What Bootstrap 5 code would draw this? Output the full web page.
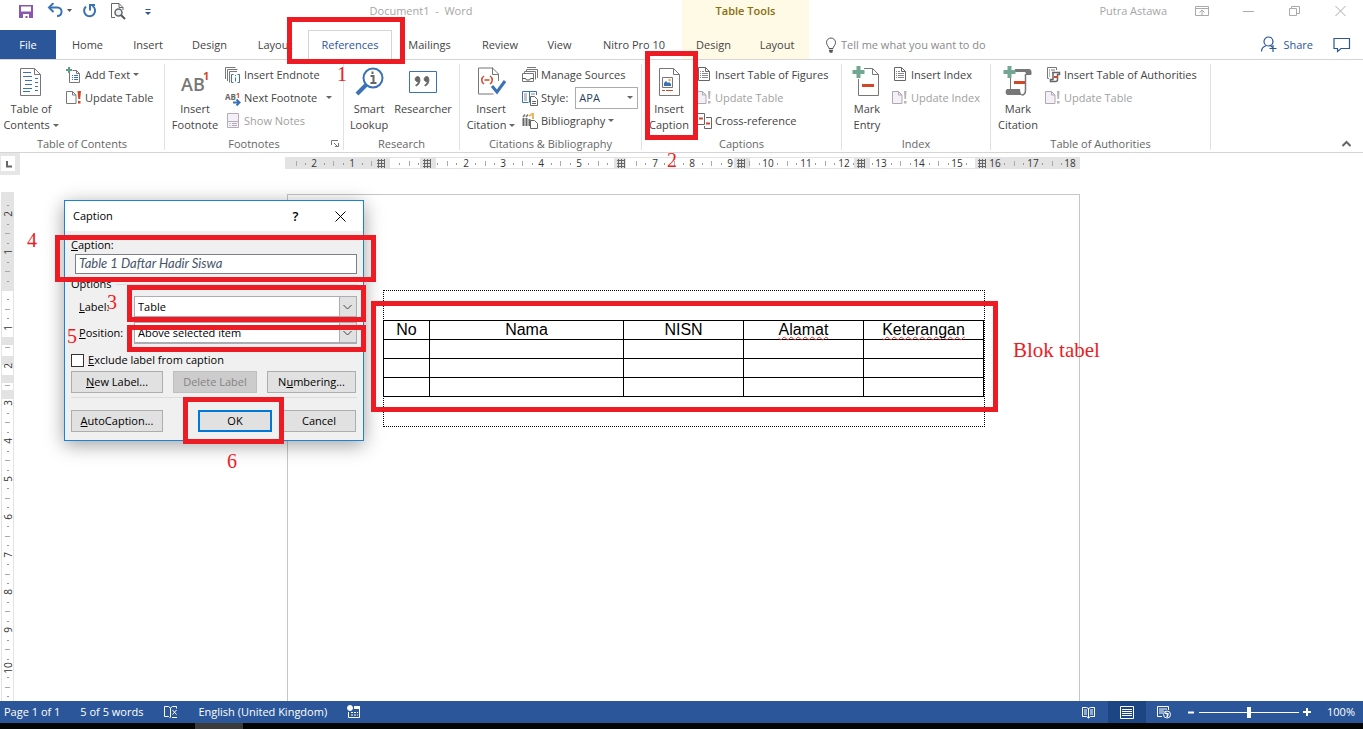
<!DOCTYPE html>
<html lang="en">
<head>
<meta charset="utf-8">
<meta name="viewport" content="width=device-width, initial-scale=1">
<title>Document1 - Word</title>
<link href="https://cdn.jsdelivr.net/npm/bootstrap@5.3.0/dist/css/bootstrap.min.css" rel="stylesheet">
<style>
:root { --ui: "Open Sans", "Noto Sans", sans-serif; --blue: #2b579a; --line: #d5d5d5; --mark: #ed1c24; }
body { font-family: var(--ui); font-size: 11px; line-height: 16px; color: #444; background: #fff; height: 100vh; overflow: hidden; }
button, input, select { font: inherit; color: inherit; }
svg { display: block; flex: none; fill: none; }
.plain { border: 0; background: none; padding: 0; color: inherit; text-align: center; }
a { color: inherit; text-decoration: none; }

/* title bar and tabs */
.titlebar { display: grid; grid-template-columns: 160px 522px 127px 1fr; height: 30px; color: #a6a6a6; }
.titlebar > * { padding-bottom: 8px; }
.doc-name { white-space: pre; }
.tooltab { background: #fffae6; color: #8a6d0f; }
.winbtn { width: 46px; height: 22px; display: flex; align-items: center; justify-content: center; }
.tabs { display: grid; grid-template-columns: 56px 63px 58px 65px 66px 84px 75px 66px 53px 96px 63px 64px 1fr; height: 29px; }
.tab { display: flex; align-items: center; justify-content: center; position: relative; white-space: nowrap; }
.tab-file { background: var(--blue); color: #fff; }
.tab-active { border: 1px solid var(--line); border-bottom: 0; color: var(--blue); }
.mk { position: absolute; border: 5px solid var(--mark); pointer-events: none; z-index: 5; }
.num { position: absolute; font-family: "Liberation Serif", serif; font-size: 20px; line-height: 20px; color: var(--mark); z-index: 6; white-space: nowrap; }
.mk-tab { inset: -14px -14px -5px -22px; }
.ask { width: 170px; border: 0; padding: 0; background: none; outline: 0; }
.ask::placeholder { color: #8a8a8a; opacity: 1; }
.share { color: var(--blue); }

/* ribbon */
.ribbon { display: grid; grid-template-columns: 165px 179px 116px 182px 200px 149px 220px 1fr; border-top: 1px solid var(--line); border-bottom: 1px solid var(--line); padding: 4px 0 2px; }
.group { border-right: 1px solid #e1e1e1; position: relative; }
.group-body { height: 74px; display: flex; }
.group-name { line-height: 12px; text-align: center; color: #666; }
.big { padding-top: 2px; display: flex; flex-direction: column; align-items: center; white-space: nowrap; width: 62px; flex: none; position: relative; }
.big svg.pic { margin-bottom: 3px; }
.smalls { display: flex; flex-direction: column; align-items: flex-start; }
.item { height: 23px; padding: 0 0 2px; display: flex; align-items: center; gap: 3px; white-space: nowrap; }
.item:disabled { color: #a0a0a0; }
.w60 { width: 60px; } .w58 { width: 58px; } .w54 { width: 54px; } .w50 { width: 50px; }
.caret { display: inline-block; border: 3px solid transparent; border-top-color: #666; border-bottom: 0; vertical-align: 2px; }
.style-pick { width: 63px; height: 22px; border: 1px solid #ababab; border-radius: 0; padding: 0 3px; color: #2b3f5c; appearance: none;
  background: #fff url("data:image/svg+xml,%3Csvg xmlns='http://www.w3.org/2000/svg' width='6' height='3'%3E%3Cpath d='M0 0h6L3 3z' fill='%23666'/%3E%3C/svg%3E") no-repeat right 4px center; }
.mk-cap { inset: -13px -2px -2px 3px; }

/* document */
.workspace { position: relative; overflow: hidden; min-height: 0; }
.rule-row { margin-bottom: 17px; }
.corner { width: 20px; height: 22px; background: #e6e6e6; padding: 3px 5px 4px 1px; }
.corner div { background: #fff; height: 15px; }
.hruler { padding-right: 18px; }
.vruler { width: 20px; padding-left: 1px; }
.ruler text { font-size: 10px; fill: #333; text-anchor: middle; }
.page-col { padding: 2px 16px 0 0; }
.sheet { width: 793px; border: 1px solid #c6c6c6; border-bottom: 0; padding: 95px; }
.frame { width: 602px; border: 1px dotted #000; padding: 29px 0; position: relative; }
.grid { font-family: "Liberation Sans", sans-serif; font-size: 16px; line-height: 18px; color: #000; border: 1px dotted #000; border-collapse: collapse; table-layout: fixed; width: 601px; margin-left: -1px; }
.grid th, .grid td { border: 1px solid #000; height: 19px; padding: 0; text-align: center; font-weight: 400; }
.c-no { width: 46px; } .c-nama { width: 194px; } .c-std { width: 120px; }
.typo { text-decoration: underline wavy #e03030 1px; text-underline-offset: 1px; text-decoration-skip-ink: none; }
.mk-table { inset: 10px -14px 14px -13px; }
.blok { left: 629px; top: 49px; font-size: 21px; }

/* dialog */
.dlg { position: absolute; left: 64px; top: 47px; width: 300px; border: 1px solid #1883d7; background: #f0f0f0; color: #000; box-shadow: 0 4px 18px rgba(0,0,0,.38); }
.dlg-head { background: #fff; height: 30px; padding-left: 8px; }
.dlg-head button { width: 45px; height: 30px; }
.help { font-size: 13px; }
.dlg-body { padding: 6px 6px 8px; }
.boxed { display: block; width: 282px; height: 20px; margin: 1px 0 2px 4px; border: 1px solid #7a7f88; background: #fff; padding: 0 3px 2px; font: italic 13px/16px Lato, sans-serif; color: #44546a; }
.optline { flex: 1; height: 1px; background: #dcdcdc; }
.drop { width: 223px; height: 22px; border: 1px solid #abadb3; border-width: 1px 1px 2px; border-radius: 0; padding: 0 3px; appearance: none; color: #000;
  background: #fff url("data:image/svg+xml,%3Csvg xmlns='http://www.w3.org/2000/svg' width='17' height='20'%3E%3Cpath d='M0 0h17v20H0z' fill='%23e1e1e1'/%3E%3Cpath d='M.5 0v20' stroke='%23abadb3'/%3E%3Cpath d='M4.500 8l4 4 4-4' fill='none' stroke='%23444'/%3E%3C/svg%3E") no-repeat right top; }
.tick { appearance: none; width: 13px; height: 13px; border: 1px solid #333; background: #fff; margin: 0 4px 0 0; }
.tick-row { margin: 8px 0 3px; }
.push { height: 22px; border: 1px solid #adadad; background: #e1e1e1; padding: 0; line-height: 18px; }
.push:disabled { background: #ccc; border-color: #bfbfbf; color: #838383; }
.push.main { border: 2px solid #0078d7; width: 74px; margin-right: 10px; }
.push-row { padding-right: 1px; }
.w92 { width: 92px; } .w84 { width: 84px; } .w89 { width: 89px; } .w74 { width: 74px; }
.mk-cp { left: -10px; top: 34px; width: 321px; height: 47px; }
.mk-lb { left: 62px; top: 84px; width: 239px; height: 37px; }
.mk-ps { left: 62px; top: 124px; width: 239px; height: 27px; }
.mk-ok { left: 118px; top: 196px; width: 101px; height: 47px; }
.n1 { left: 337px; top: 64px; } .n2 { left: 667px; top: 150px; }
.n3 { left: 42px; top: 91px; } .n4 { left: -38px; top: 29px; } .n5 { left: 2px; top: 125px; } .n6 { left: 162px; top: 250px; }

/* status bar */
.status { background: var(--blue); color: #fff; height: 22px; }
.status svg { stroke: #fff; }
.status-left { gap: 20px; padding-left: 4px; }
.view-on { background: #1c4583; width: 38px; height: 22px; display: flex; align-items: center; justify-content: center; }
.zoomer { appearance: none; width: 100px; height: 12px; margin: 0; background: linear-gradient(#fff, #fff) center / 100% 1px no-repeat; }
.zoomer::-webkit-slider-thumb { appearance: none; width: 4px; height: 11px; background: #fff; }
.taskbar { background: #050505; height: 6px; padding-left: 195px; }
.taskbar div { background: #3b3b3b; width: 48px; height: 6px; }
</style>
</head>
<body class="d-flex flex-column position-relative">

<svg width="0" height="0" class="position-absolute">
  <defs>
    <symbol id="upd" viewBox="0 0 16 16"><path d="M.5 1.500h6l3.500 3.500v8.500H.5z" fill="#fff" stroke="#777"/><path d="M6.500 1.500V5H10" stroke="#777"/><path d="M11.500 1H15l-.8 8h-1.900zM12 11h2.500v2.500H12z" fill="#d24726"/></symbol>
    <symbol id="upd-off" viewBox="0 0 16 16"><path d="M.5 1.500h6l3.500 3.500v8.500H.5z" fill="#f5eff7" stroke="#b0a8b0"/><path d="M6.500 1.500V5H10" stroke="#b0a8b0"/><path d="M12 1h2.500l-.5 8h-1.500zM12 11h2.500v2.500H12z" fill="#b5b5b5"/></symbol>
    <symbol id="list" viewBox="0 0 16 16"><path d="M2.500.500h7l4 4v9h-11z" fill="#fff" stroke="#666"/><path d="M9.500.500v4h4" stroke="#666"/><path d="M4 4.500h1M6 4.500h2M4 6.500h1M6 6.500h6M4 8.500h1M6 8.500h6M4 10.500h1M6 10.500h6" stroke="#888"/></symbol>
  </defs>
</svg>

<header>
  <div class="titlebar">
    <div class="d-flex align-items-center">
      <button class="plain ms-3" aria-label="Save"><svg width="20" height="16"><path d="M3 2h14v13H3z" fill="#8a56b0"/><path d="M5 3.500h10v5H5zM7 11h6v4h-1.500v-2H9.500v2H7z" fill="#fff"/></svg></button>
      <button class="plain ms-2" aria-label="Undo"><svg width="28" height="16"><path d="M5 4.500h8.500c5.500 0 5.500 8.500-.5 8.500" stroke="#3a72b4" stroke-width="2"/><path d="M9.500 0L5 4.500 9.500 9" stroke="#3a72b4" stroke-width="2"/><path d="M23 6h5l-2.500 3z" fill="#555"/></svg></button>
      <button class="plain ms-2" aria-label="Redo"><svg width="20" height="16"><path d="M6 3.500a5.500 5.500 0 1 0 6.500-.5" stroke="#3a72b4" stroke-width="2"/><path d="M10 7.500V2h5" stroke="#3a72b4" stroke-width="2"/></svg></button>
      <button class="plain ms-2" aria-label="Print Preview"><svg width="20" height="18"><path d="M7 15.500H3.500v-14H11l4 4V8M11 1.500v4h4" stroke="#666"/><circle cx="10.500" cy="10.500" r="3.500" stroke="#666" stroke-width="1.500" fill="#e8f0f8"/><path d="M13 13l4 4" stroke="#555" stroke-width="2"/></svg></button>
      <button class="plain ms-3" aria-label="Customize Quick Access Toolbar"><svg width="8" height="10"><path d="M1.500 3.500h5" stroke="#2b579a"/><path d="M1 6h6L4 9z" fill="#2b579a"/></svg></button>
    </div>
    <div class="doc-name d-flex align-items-center justify-content-center">Document1  -  Word</div>
    <div class="tooltab d-flex align-items-center justify-content-center fw-semibold">Table Tools</div>
    <div class="d-flex align-items-center justify-content-end">
      <span class="me-2 pe-1">Putra Astawa</span>
      <button class="plain winbtn" aria-label="Ribbon Display Options"><svg width="14" height="10" stroke="#aaa"><path d="M.5.5h13v9H.5zM.5 2.500h13M7 9V4M4.500 6.500L7 4l2.500 2.500"/></svg></button>
      <button class="plain winbtn" aria-label="Minimize"><svg width="11" height="10" stroke="#aaa"><path d="M0 5.500h11"/></svg></button>
      <button class="plain winbtn" aria-label="Restore"><svg width="11" height="10" stroke="#aaa"><path d="M.5 2.500h7v7h-7zM2.500 2.500v-2h8v7h-3"/></svg></button>
      <button class="plain winbtn" aria-label="Close"><svg width="11" height="10" stroke="#aaa"><path d="M.5 0l10 10M10.500 0l-10 10"/></svg></button>
    </div>
  </div>
  <nav class="tabs">
    <a href="#" class="tab tab-file">File</a>
    <a href="#" class="tab">Home</a>
    <a href="#" class="tab">Insert</a>
    <a href="#" class="tab">Design</a>
    <a href="#" class="tab">Layout</a>
    <a href="#" class="tab tab-active">References<span class="mk mk-tab"></span></a>
    <a href="#" class="tab">Mailings</a>
    <a href="#" class="tab">Review</a>
    <a href="#" class="tab">View</a>
    <a href="#" class="tab">Nitro Pro 10</a>
    <a href="#" class="tab tooltab text-reset">Design</a>
    <a href="#" class="tab tooltab text-reset">Layout</a>
    <div class="d-flex align-items-center ps-3">
      <svg width="12" height="16" stroke="#555"><path d="M4 11.500c0-2-2.500-3-2.500-6a4.500 4.500 0 0 1 9 0c0 3-2.500 4-2.500 6z"/><path d="M4 13.500h4M4.500 15h3" stroke-width="1.500"/></svg>
      <input class="ask ms-1" type="text" aria-label="Tell me what you want to do" placeholder="Tell me what you want to do">
      <button class="plain share ms-auto d-flex align-items-center gap-1"><svg width="18" height="17" stroke="#2b579a" stroke-width="1.200"><circle cx="7.500" cy="5.500" r="4.500"/><path d="M.5 15.500c0-3 2-5 5-6M9.500 10c1 .4 1.500.8 2 1.300M12 9v7M8.500 12.500h7"/></svg>Share</button>
      <button class="plain ms-3 me-2 px-1" aria-label="Comments"><svg width="18" height="16" stroke="#2b579a" stroke-width="1.200"><path d="M1 1.500h15.500v10H8l-3.500 3v-3H1z"/></svg></button>
    </div>
  </nav>
</header>

<section class="ribbon">
  <div class="group">
    <div class="group-body">
      <button class="plain big">
        <svg class="pic" width="32" height="32"><path d="M5.500 2.500h14l6 6v21h-20z" fill="#fff" stroke="#777"/><path d="M19.500 2.500v6h6" stroke="#777"/><path d="M8 6.500h8M8 10.500h9M10 14.500h7M10 18.500h7M8 22.500h9M8 25.500h7M20 12.500h3M20 16.500h3M20 20.500h3M20 24.500h3" stroke="#3a72b4"/></svg>
        <span>Table of</span><span>Contents <i class="caret"></i></span>
      </button>
      <div class="smalls ps-1">
        <button class="plain item"><svg width="16" height="16"><path d="M3.500 6v9.500h10v-9l-3-3h-4" stroke="#777"/><path d="M6 8.500h1M8 8.500h4M6 10.500h1M8 10.500h4M6 12.500h1M8 12.500h4" stroke="#3a72b4"/><path d="M10.500 3.500v3h3" stroke="#777"/><path d="M3 0v6M0 3h6" stroke="#5d9b84" stroke-width="2"/></svg>Add Text <i class="caret"></i></button>
        <button class="plain item"><svg width="16" height="16"><use href="#upd"/></svg>Update Table</button>
      </div>
    </div>
    <div class="group-name">Table of Contents</div>
  </div>

  <div class="group">
    <div class="group-body">
      <button class="plain big w60">
        <svg class="pic" width="32" height="32"><text x="2" y="25" font-size="18" font-weight="600" fill="#777">AB</text><text x="24" y="14" font-size="11" font-weight="700" fill="#d24726">1</text></svg>
        <span>Insert</span><span>Footnote</span>
      </button>
      <div class="smalls">
        <button class="plain item"><svg width="16" height="16"><path d="M.5 12V.5h10M2.500 14V2.500h10M12 4.500H4.500v11" stroke="#777"/><path d="M8.500 7.500h-2v8h2M12.500 7.500h2v8h-2M10.500 10.500v4M10.500 8v1" stroke="#3a72b4"/></svg>Insert Endnote</button>
        <button class="plain item"><svg width="16" height="16"><text x="0" y="10" font-size="8" font-weight="700" fill="#666">AB</text><text x="11" y="8" font-size="7" font-weight="700" fill="#d24726">1</text><path d="M8 12.500h6M11.500 9.500l3 3-3 3" stroke="#3a72b4" stroke-width="2"/></svg>Next Footnote &nbsp; <i class="caret"></i></button>
        <button class="plain item" disabled><svg width="16" height="16" stroke="#b5adb5"><path d="M2.500.5h11v14h-11z" fill="#f5eff7"/><path d="M2.500 8.500h11M4.500 10.500h1M7 10.500h5M4.500 12.500h1M7 12.500h5"/></svg>Show Notes</button>
      </div>
    </div>
    <div class="group-name">Footnotes</div>
    <button class="plain position-absolute bottom-0 end-0 me-1" aria-label="Footnote options"><svg width="8" height="11" stroke="#777"><path d="M.5 6V1.500H7M3 4l3 3M7.500 4v3.500H4"/></svg></button>
  </div>

  <div class="group">
    <div class="group-body">
      <button class="plain big w50">
        <svg class="pic" width="32" height="32"><path d="M4 28l9-9" stroke="#3a72b4" stroke-width="4"/><circle cx="20" cy="12" r="9.500" stroke="#3a72b4" stroke-width="2" fill="#fff"/><path d="M17.500 10h3v6.500M17.500 17h6M19.500 5.500V8" stroke="#666" stroke-width="2"/></svg>
        <span>Smart</span><span>Lookup</span>
      </button>
      <button class="plain big w58">
        <svg class="pic" width="32" height="32"><path d="M2.500 5.500h27v21h-27z" stroke="#3a72b4" fill="#fff"/><path d="M12 11a2.500 2.500 0 1 0-.5 4.500c-.3 1.800-1.500 3-2.800 3.600l.7.900c3-1.400 4.600-6 2.600-9zM21 11a2.500 2.500 0 1 0-.5 4.500c-.3 1.800-1.500 3-2.800 3.600l.7.900c3-1.400 4.600-6 2.600-9z" fill="#666" stroke="#666"/></svg>
        <span>Researcher</span>
      </button>
    </div>
    <div class="group-name">Research</div>
  </div>

  <div class="group">
    <div class="group-body">
      <button class="plain big">
        <svg class="pic" width="32" height="32"><path d="M23.500 15V8l-6-6H3.500v26h15M17.500 1.500v7h6" stroke="#777"/><path d="M9 10c-3 2-3 6 0 8M15 10c3 2 3 6 0 8M9.500 14h5" stroke="#d24726" stroke-width="1.500"/><path d="M17 20l5 6 8-11" stroke="#3a72b4" stroke-width="3"/></svg>
        <span>Insert</span><span>Citation <i class="caret"></i></span>
      </button>
      <div class="smalls">
        <button class="plain item"><svg width="16" height="16" stroke="#777"><path d="M.5 6.500h11v8H.5zM2.500 6V4.500h11v8M4.500 4V2.500h11V11M5 .5h9"/><path d="M.5 11.500h3l1 1.500h3l1-1.500h3" stroke="#555"/></svg>Manage Sources</button>
        <div class="item"><svg width="16" height="16"><path d="M6.500 12.500h-6v-11h14V5M7.500 1.500v11" stroke="#3a72b4"/><path d="M2 4h3M2 6h3M2 8h3M2 10h3M9 4h4" stroke="#888"/><path d="M8.500 6.500h4l3 3v6h-7zM10 11.500h4M10 13.500h4" stroke="#666" fill="#fff"/></svg><label for="cite">Style:</label><select id="cite" class="style-pick ms-1"><option>APA</option></select></div>
        <button class="plain item"><svg width="16" height="16"><path d="M1.500 5v8M4.500 5v8M7.500 6v7" stroke="#666" stroke-width="2"/><path d="M1 4l2-2.500M4 4l2-2.500" stroke="#777" stroke-width="1.500"/><path d="M7 3l4-2.500V6" stroke="#e8b860" stroke-width="2"/><path d="M8.500 7.500h4l3 3v5h-7z" stroke="#666" fill="#fff"/></svg>Bibliography <i class="caret"></i></button>
      </div>
    </div>
    <div class="group-name">Citations &amp; Bibliography</div>
  </div>

  <div class="group">
    <div class="group-body">
      <button class="plain big w54">
        <svg class="pic" width="32" height="32"><path d="M6.500 2.500h14l6 6v21h-20z" fill="#fff" stroke="#777"/><path d="M20.500 2.500v6h6M9.500 11.500h10v10h-10z" stroke="#777"/><path d="M11 20v-3l2-2 2 2 1-1 2 2v2z" fill="#3a72b4"/><circle cx="16.500" cy="14" r="1.200" fill="#e8b050"/><path d="M9 24.500h3M13 24.500h7" stroke="#d24726"/></svg>
        <span>Insert</span><span>Caption</span><span class="mk mk-cap"></span>
      </button>
      <div class="smalls">
        <button class="plain item"><svg width="16" height="16"><use href="#list"/></svg>Insert Table of Figures</button>
        <button class="plain item" disabled><svg width="16" height="16"><use href="#upd-off"/></svg>Update Table</button>
        <button class="plain item"><svg width="16" height="16"><path d="M1.500.500h7v11h-7zM10 4.500h5.500v11h-7V13" stroke="#666"/><path d="M3 5.500h4M10 10.500h4" stroke="#d24726" stroke-width="2"/></svg>Cross-reference</button>
      </div>
    </div>
    <div class="group-name">Captions</div>
  </div>

  <div class="group">
    <div class="group-body">
      <button class="plain big w50">
        <svg class="pic" width="32" height="32"><path d="M7.500 13v16.500h20v-21l-6-6H13M21.500 2.500v6h6" stroke="#777"/><path d="M11 19.500h12" stroke="#d24726" stroke-width="3"/><path d="M7.500 0v12M1.500 6h12" stroke="#72a792" stroke-width="4"/></svg>
        <span>Mark</span><span>Entry</span>
      </button>
      <div class="smalls">
        <button class="plain item"><svg width="16" height="16"><use href="#list"/></svg>Insert Index</button>
        <button class="plain item" disabled><svg width="16" height="16"><use href="#upd-off"/></svg>Update Index</button>
      </div>
    </div>
    <div class="group-name">Index</div>
  </div>

  <div class="group">
    <div class="group-body">
      <button class="plain big w54">
        <svg class="pic" width="32" height="32"><path d="M8.500 12v12" stroke="#777"/><path d="M23.500 8v16c0 3-1 5-4 5" stroke="#777" stroke-width="1.500"/><path d="M13 3h14c3 0 3 5 2 6h-5c0-1 0-2-1-3H13zM5 23h13c0 3 1 5 2 6H6c-3 0-3-4-1-6z" fill="#777"/><path d="M12 16.500h11" stroke="#d24726" stroke-width="3"/><path d="M7.500 0v12M1.500 6h12" stroke="#72a792" stroke-width="4"/></svg>
        <span>Mark</span><span>Citation</span>
      </button>
      <div class="smalls">
        <button class="plain item"><svg width="16" height="16"><path d="M4 11.500H2.500v-11h9V3M4 3h1M6 3h4M4 5h1M4 7h1M4 9h1" stroke="#777"/><path d="M7 5.500h7.500v2h-2v5c0 1-1 2-2 2H5.500v-2H8v-7" stroke="#666" stroke-width="1.500" fill="#fff"/><path d="M9 10h4" stroke="#d24726" stroke-width="2"/></svg>Insert Table of Authorities</button>
        <button class="plain item" disabled><svg width="16" height="16"><use href="#upd-off"/></svg>Update Table</button>
      </div>
    </div>
    <div class="group-name">Table of Authorities</div>
  </div>
  <div class="d-flex align-items-end justify-content-end pe-2 me-1"><button class="plain" aria-label="Collapse the Ribbon"><svg width="9" height="12"><path d="M.5 8l4-4 4 4" stroke="#666" stroke-width="2"/></svg></button></div>
</section>

<main class="workspace flex-grow-1 d-flex flex-column">
  <div class="d-flex rule-row">
    <div class="corner"><div><svg width="14" height="15"><path d="M6 5v5.500h5" stroke="#666" stroke-width="2"/></svg></div></div>
    <div class="hruler flex-grow-1 d-flex justify-content-center pt-1"><svg id="hr" class="ruler" width="795" height="12"></svg></div>
  </div>
  <div class="d-flex flex-grow-1">
    <div class="vruler"><svg id="vr" class="ruler" width="13" height="509"></svg></div>
    <div class="page-col flex-grow-1 d-flex justify-content-center">
      <div class="sheet">
        <div class="frame">
          <table class="grid">
            <colgroup><col class="c-no"><col class="c-nama"><col class="c-std"><col class="c-std"><col class="c-std"></colgroup>
            <thead><tr><th>No</th><th>Nama</th><th>NISN</th><th><span class="typo">Alamat</span></th><th><span class="typo">Keterangan</span></th></tr></thead>
            <tbody>
              <tr><td></td><td></td><td></td><td></td><td></td></tr>
              <tr><td></td><td></td><td></td><td></td><td></td></tr>
              <tr><td></td><td></td><td></td><td></td><td></td></tr>
            </tbody>
          </table>
          <span class="mk mk-table"></span>
          <span class="num blok">Blok tabel</span>
        </div>
      </div>
    </div>
  </div>

  <div class="dlg" role="dialog" aria-label="Caption">
    <div class="dlg-head d-flex align-items-center">
      <span class="me-auto">Caption</span>
      <button class="plain help fw-semibold" aria-label="Help">?</button>
      <button class="plain d-flex align-items-center justify-content-center" aria-label="Close"><svg width="11" height="11" stroke="#000"><path d="M.5.500l10 10M10.500.500l-10 10"/></svg></button>
    </div>
    <form class="dlg-body" onsubmit="return false">
      <label for="cap" class="d-block"><u>C</u>aption:</label>
      <input id="cap" class="boxed" type="text" value="Table 1 Daftar Hadir Siswa">
      <div class="d-flex align-items-center gap-1 mb-1">Options<span class="optline"></span></div>
      <div class="d-flex align-items-center justify-content-between mb-1 ps-2"><label for="lab"><u>L</u>abel:</label><select id="lab" class="drop"><option>Table</option></select></div>
      <div class="d-flex align-items-center justify-content-between ps-2"><label for="pos"><u>P</u>osition:</label><select id="pos" class="drop"><option>Above selected item</option></select></div>
      <div class="d-flex align-items-center tick-row"><input id="exc" class="tick" type="checkbox"><label for="exc"><u>E</u>xclude label from caption</label></div>
      <div class="d-flex justify-content-between push-row"><button class="push w92"><u>N</u>ew Label...</button><button class="push w84" disabled>Delete Label</button><button class="push w89">N<u>u</u>mbering...</button></div>
      <div class="optline mt-1 mb-2"></div>
      <div class="d-flex pt-1 push-row"><button class="push w92 me-auto"><u>A</u>utoCaption...</button><button class="push main">OK</button><button class="push w74">Cancel</button></div>
    </form>
    <span class="mk mk-cp"></span><span class="mk mk-lb"></span><span class="mk mk-ps"></span><span class="mk mk-ok"></span>
    <span class="num n3">3</span><span class="num n4">4</span><span class="num n5">5</span><span class="num n6">6</span>
  </div>
</main>

<footer>
  <div class="status d-flex align-items-center">
    <div class="status-left d-flex align-items-center">
      <span>Page 1 of 1</span>
      <span>5 of 5 words</span>
      <svg width="15" height="14"><path d="M6.500 12.500l-1-1h-4v-10h4l2 1.500v9.500M7.500 3l2-1.500h4v2M9 12.500h5M9.500 5l4 4.500M13.500 5l-4 4.500"/></svg>
      <span>English (United Kingdom)</span>
      <svg width="14" height="14"><path d="M1.500 7v5.500h11v-9" /><path d="M4 7.500h2M7 7.500h2M10 7.500h1M4 10h2M7 10h2M10 10h1"/><circle cx="3" cy="3" r="2.500" fill="#fff"/><path d="M7 2.500h6" stroke-width="3"/></svg>
    </div>
    <svg class="ms-auto me-2" width="14" height="13"><path d="M6.500 2v10M.5 10.500h4l2 1.500 2-1.500h4v-9h-4l-2 1-2-1h-4zM2 4h3M2 6h3M2 8h3M8 4h3M8 6h3M8 8h3"/></svg>
    <span class="view-on ms-1"><svg width="14" height="13"><path d="M.5.500h13v12H.5zM2 3.500h10M2 5.500h10M2 7.500h10M2 9.500h10"/></svg></span>
    <svg class="ms-2 me-3" width="18" height="14"><path d="M8 11.500H3.500v-10h11V5M5 4h8M5 6h5M5 8h4"/><circle cx="13" cy="9.500" r="3.500"/><path d="M11 8l3 1-1 3" stroke-width="1.500"/></svg>
    <svg width="7" height="12"><path d="M0 6.500h6" stroke-width="2"/></svg>
    <input class="zoomer mx-1" type="range" aria-label="Zoom" value="50">
    <svg width="8" height="12"><path d="M0 6h8M4 2v8" stroke-width="2"/></svg>
    <span class="ms-3 me-2">100%</span>
  </div>
  <div class="taskbar"><div></div></div>
</footer>

<span class="num n1">1</span><span class="num n2">2</span>

<script src="https://cdn.jsdelivr.net/npm/bootstrap@5.3.0/dist/js/bootstrap.bundle.min.js"></script>
<script>
const CM = 37.8;

/* Draws one ruler: grey bands, quarter dots, half ticks and centimetre numbers. */
function ruler(id, vertical, length, zero, bands, marks, labels) {
  const t = vertical ? 13 : 12;
  const box = (a, b, c, d, fill) => vertical
    ? `<rect x="${c}" y="${a}" width="${d}" height="${b}" fill="${fill}"/>`
    : `<rect x="${a}" y="${c}" width="${b}" height="${d}" fill="${fill}"/>`;
  let s = box(0, length, 0, t, '#e3e3e3') + box(0, length, 1, t - 2, '#fff');
  bands.forEach(([a, b]) => s += box(a, b - a, 0, t, '#e3e3e3'));
  const clear = p => !marks.some(m => Math.abs(m - p) < 7);
  for (let q = -12; q < 80; q++) {
    const p = Math.round(zero + q * CM / 4), inBand = vertical && bands.slice(1).some(([a, b]) => p >= a && p < b);
    if (q % 4 === 0 || p < 5 || p > length - 3 || !clear(p) || inBand) continue;
    s += q % 2 ? box(p, 1, t / 2 | 0, 2, '#999') : box(p, 1, 4, 5, '#aaa');
  }
  labels.forEach(n => {
    const p = Math.round(zero + n * CM);
    s += vertical
      ? `<text transform="translate(11 ${p}) rotate(-90)">${Math.abs(n)}</text>`
      : `<text x="${p}" y="10">${Math.abs(n)}</text>`;
  });
  marks.forEach(m => s += `<path d="M${m - 4} 3.500h8M${m - 4} 6.500h8M${m - 4} 9.500h8M${m - 2.5} 2v9M${m + .5} 2v9M${m + 3.5} 2v9" stroke="#666"/>`);
  document.getElementById(id).innerHTML = s;
}

ruler('hr', false, 795, 105, [[0, 105], [135, 151], [329, 341], [449, 465], [569, 585], [690, 795]],
  [96, 142, 336, 456, 576, 697], [-2, -1, 2, 3, 4, 5, 7, 8, 9, 10, 11, 12, 13, 14, 15, 16, 17, 18]);
ruler('vr', true, 509, 98, [[0, 99], [145, 153], [164, 173], [183, 191], [198, 207]],
  [], [-2, -1, 1, 2, 3, 4, 5, 6, 7, 8, 9, 10]);
</script>
</body>
</html>
